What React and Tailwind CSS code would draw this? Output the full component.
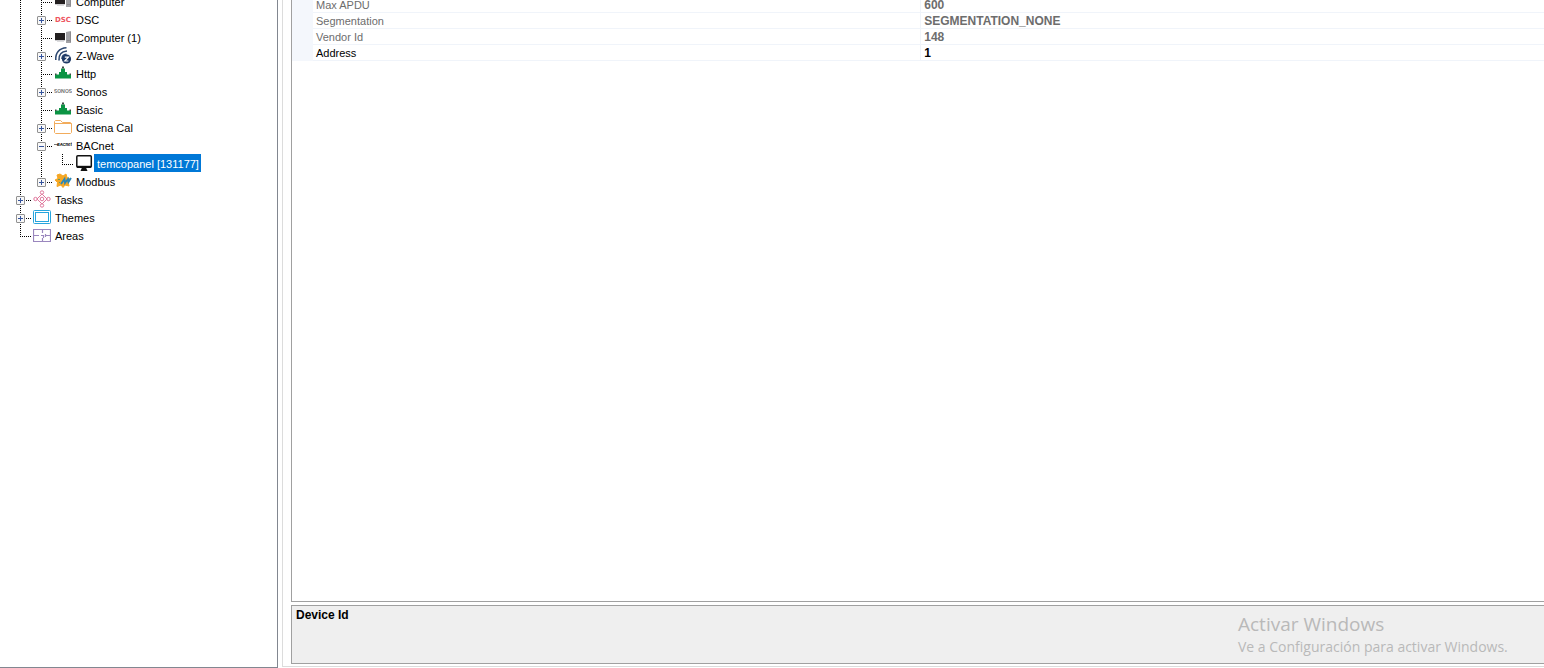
import { useState } from 'react';
import clsx from 'clsx';

const Icon = ({ children, ...props }) => (
  <svg width="18" height="18" viewBox="0 0 18 18" fill="none" className="shrink-0" aria-hidden="true" {...props}>
    {children}
  </svg>
);

const ComputerIcon = () => (
  <Icon>
    <rect x="1" y="5" width="10" height="7" fill="#231f20" />
    <path d="M1 12.5h10" stroke="#cfcfd2" />
    <path d="M3 13.5h7" stroke="#dddddf" />
    <path d="M12 4l5-1v12h-5z" fill="#a2a2a6" />
    <path d="M16.5 4v10M13 12.5h3" stroke="#8c8c90" />
  </Icon>
);

const DscIcon = () => (
  <Icon>
    <text x="9" y="11.500" textAnchor="middle" fontFamily="DejaVu Sans, sans-serif" fontSize="7" fontWeight="700" fill="#ee5560">DSC</text>
  </Icon>
);

const ZWaveIcon = () => (
  <Icon>
    <path d="M1.800 14C1.200 7 5 2.200 12.500 1.800M5 14.500C4.500 9 7.500 5.500 13 5M8 13C8 10.500 9.500 8.500 12.500 8.300" stroke="#2c4770" strokeWidth="1.600" />
    <circle cx="12.500" cy="13" r="4.600" fill="#1d3965" />
    <path d="M10.800 11.200h3.600l-3.600 3.800h3.600" stroke="#fff" strokeWidth="1.200" />
  </Icon>
);

const PlugIcon = () => (
  <Icon>
    <path d="M7 4.500h4V8h2v2.500h4v4H1v-4h4V8h2z" fill="#0b9444" />
    <path d="M8 2.500h2v2H8zM1 9.500h1.500v1.500H1zM15.500 9.500H17v1.500h-1.500z" fill="#3e4a44" />
  </Icon>
);

const SonosIcon = () => (
  <Icon>
    <text x="9" y="11" textAnchor="middle" fontFamily="Inter, sans-serif" fontSize="5" fontWeight="600" fill="#666">SONOS</text>
  </Icon>
);

const FolderIcon = () => (
  <Icon stroke="#f2ac5c">
    <path d="M.5 14.500v-11l1-1h5l2 2h8l1 1v9l-1 1h-15zM.5 5.500h17" />
  </Icon>
);

const BacnetIcon = () => (
  <Icon>
    <path d="M0 8.500h4" stroke="#777" />
    <text x="10.500" y="10" textAnchor="middle" fontFamily="Inter, sans-serif" fontSize="4" fontWeight="800" fontStyle="italic" fill="#222">BACnet</text>
  </Icon>
);

const MonitorIcon = () => (
  <Icon>
    <rect x="1.800" y="1.800" width="14.500" height="11.500" rx="1" stroke="#111" strokeWidth="1.500" />
    <path d="M2 12.800h14" stroke="#111" strokeWidth="2" />
    <path d="M7 13.500h4l1.500 3.500h-7z" fill="#111" />
  </Icon>
);

const ModbusIcon = () => (
  <Icon>
    <path d="M6 2l3 2 3-2 1 3.500 3 1.500-2 3 1 4-4-1-2 2.500-2-2.500-4 1.500.5-4L1 8l3-1.500L3 3z" fill="#f6a723" stroke="#f6a723" strokeLinejoin="round" />
    <path d="M7 12l3.500-5 .5 4 3-4 .5 3L17 6" stroke="#2b87b8" strokeWidth="1.800" />
    <path d="M4 7.500h2M5 10.500h1" stroke="#6d9b5c" />
  </Icon>
);

const TasksIcon = () => (
  <Icon stroke="#e0779c">
    <path d="M9 4l5 5-5 5-5-5z" />
    <circle cx="9" cy="9" r="1.800" />
    <circle cx="9" cy="2.500" r="1.700" fill="#fff" />
    <circle cx="9" cy="15.500" r="1.700" fill="#fff" />
    <circle cx="2.500" cy="9" r="1.700" fill="#fff" />
    <circle cx="15.500" cy="9" r="1.700" fill="#fff" />
  </Icon>
);

const ThemesIcon = () => (
  <Icon stroke="#27a5dd">
    <rect x=".5" y="2.500" width="17" height="13" rx="1" />
    <rect x="2.500" y="4.500" width="13" height="9" />
  </Icon>
);

const AreasIcon = () => (
  <Icon stroke="#9a87be">
    <path d="M.5 3.500h17v12H.5zM1 9.500h5M8 9.500h3M13 9.500h4M9.500 3v4M9.500 12v4M10.500 9v3M12.500 8v3" strokeWidth="1.200" />
  </Icon>
);

const nodes = [
  { label: 'Computer', icon: ComputerIcon, level: 1 },
  { label: 'DSC', icon: DscIcon, level: 1, toggle: '+' },
  { label: 'Computer (1)', icon: ComputerIcon, level: 1 },
  { label: 'Z-Wave', icon: ZWaveIcon, level: 1, toggle: '+' },
  { label: 'Http', icon: PlugIcon, level: 1 },
  { label: 'Sonos', icon: SonosIcon, level: 1, toggle: '+' },
  { label: 'Basic', icon: PlugIcon, level: 1 },
  { label: 'Cistena Cal', icon: FolderIcon, level: 1, toggle: '+' },
  { label: 'BACnet', icon: BacnetIcon, level: 1, toggle: '-' },
  { label: 'temcopanel [131177]', icon: MonitorIcon, level: 2, last: true },
  { label: 'Modbus', icon: ModbusIcon, level: 1, toggle: '+', last: true },
  { label: 'Tasks', icon: TasksIcon, level: 0, toggle: '+' },
  { label: 'Themes', icon: ThemesIcon, level: 0, toggle: '+' },
  { label: 'Areas', icon: AreasIcon, level: 0, last: true },
];

const properties = [
  { name: 'Max APDU', value: '600', readOnly: true },
  { name: 'Segmentation', value: 'SEGMENTATION_NONE', readOnly: true },
  { name: 'Vendor Id', value: '148', readOnly: true },
  { name: 'Address', value: '1' },
];

// Dotted line of an ancestor level
function Trunk() {
  return (
    <svg width="21" height="18" className="shrink-0" aria-hidden="true">
      <path d="M10.5 0v18" stroke="#000" strokeDasharray="1 1" />
    </svg>
  );
}

// The node's own elbow, with the expand box when it has children
function Branch({ last, toggle }) {
  return (
    <svg width="23" height="18" className="shrink-0" fill="none" aria-hidden="true">
      <path d={last ? 'M10.5 0v11' : 'M10.5 0v18'} stroke="#000" strokeDasharray="1 1" />
      <path d="M10 10.5h12" stroke="#000" strokeDasharray="1 1" />
      {toggle && (
        <>
          <rect x="6.5" y="6.5" width="8" height="8" rx="0.5" fill="#f8f8f8" stroke="#919191" />
          <path d={toggle === '+' ? 'M8 10.5h5M10.5 8v5' : 'M8 10.5h5'} stroke="#34539c" />
        </>
      )}
    </svg>
  );
}

function TreeNode({ node, selected, onSelect }) {
  const NodeIcon = node.icon;

  return (
    <li
      role="treeitem"
      aria-level={node.level + 1}
      aria-selected={selected}
      className="flex h-[18px] items-center"
    >
      {Array.from({ length: node.level }, (_, i) => <Trunk key={i} />)}
      {node.toggle ? (
        <button type="button" className="shrink-0" aria-label={`${node.toggle === '+' ? 'Expand' : 'Collapse'} ${node.label}`}>
          <Branch last={node.last} toggle={node.toggle} />
        </button>
      ) : (
        <Branch last={node.last} />
      )}
      <NodeIcon />
      <button
        type="button"
        onClick={onSelect}
        className={clsx('ml-px h-[18px] pt-px pr-0.5 pl-[3px] whitespace-nowrap', selected ? 'bg-[#0078d7] text-white' : 'text-black')}
      >
        {node.label}
      </button>
    </li>
  );
}

export default function App() {
  const [selected, setSelected] = useState('temcopanel [131177]');

  return (
    <div className="flex h-screen overflow-hidden bg-white font-['Liberation_Sans',Arial,sans-serif] text-[11px] leading-4 text-black">
      {/* Device tree */}
      <nav className="w-[278px] shrink-0 overflow-hidden border-r border-b border-[#828790] pl-2.5" aria-label="Devices">
        <ul role="tree" className="-mt-2">
          {nodes.map(node => (
            <TreeNode
              key={node.label}
              node={node}
              selected={selected === node.label}
              onSelect={() => setSelected(node.label)}
            />
          ))}
        </ul>
      </nav>

      <main className="ml-1 mb-px flex min-w-0 flex-1 flex-col gap-[3px] border-b border-l border-[#dcdcdc] pb-0.5 pl-2">
        {/* Property grid */}
        <section className="min-h-0 flex-1 overflow-hidden border-b border-l border-[#a0a0a0]">
          <table className="-mt-[3px] w-full table-fixed border-separate border-spacing-0 text-left">
            <colgroup>
              <col className="w-[21px]" />
              <col className="w-[48.5%]" />
              <col />
            </colgroup>
            <tbody>
              {properties.map(p => (
                <tr key={p.name} className={clsx('h-4', p.readOnly ? 'text-[#6d6d6d]' : 'text-black')}>
                  <td className="bg-[#f4f7fc] p-0" />
                  <th scope="row" className="border-b border-[#f0f4fa] pt-0.5 pr-0 pb-0 pl-[3px] font-normal leading-[13px]">{p.name}</th>
                  <td className="border-b border-l border-[#f0f4fa] pt-0.5 pr-0 pb-0 pl-[3px] text-[12px] font-bold leading-[13px]">{p.value}</td>
                </tr>
              ))}
            </tbody>
          </table>
        </section>

        {/* Description pane */}
        <section className="h-[59px] shrink-0 border-y border-l border-[#a0a0a0] bg-[#efefef] px-1 py-px">
          <h2 className="text-[12px] font-bold">Device Id</h2>
        </section>
      </main>

      {/* Activation watermark */}
      <aside className="pointer-events-none absolute right-[31px] bottom-[10px] w-[275px] font-['Open_Sans','Noto_Sans',sans-serif] whitespace-nowrap text-[#b9b9b9]">
        <p className="text-[19px] leading-6">Activar Windows</p>
        <p className="text-[14px] leading-[22px]">Ve a Configuración para activar Windows.</p>
      </aside>
    </div>
  );
}
